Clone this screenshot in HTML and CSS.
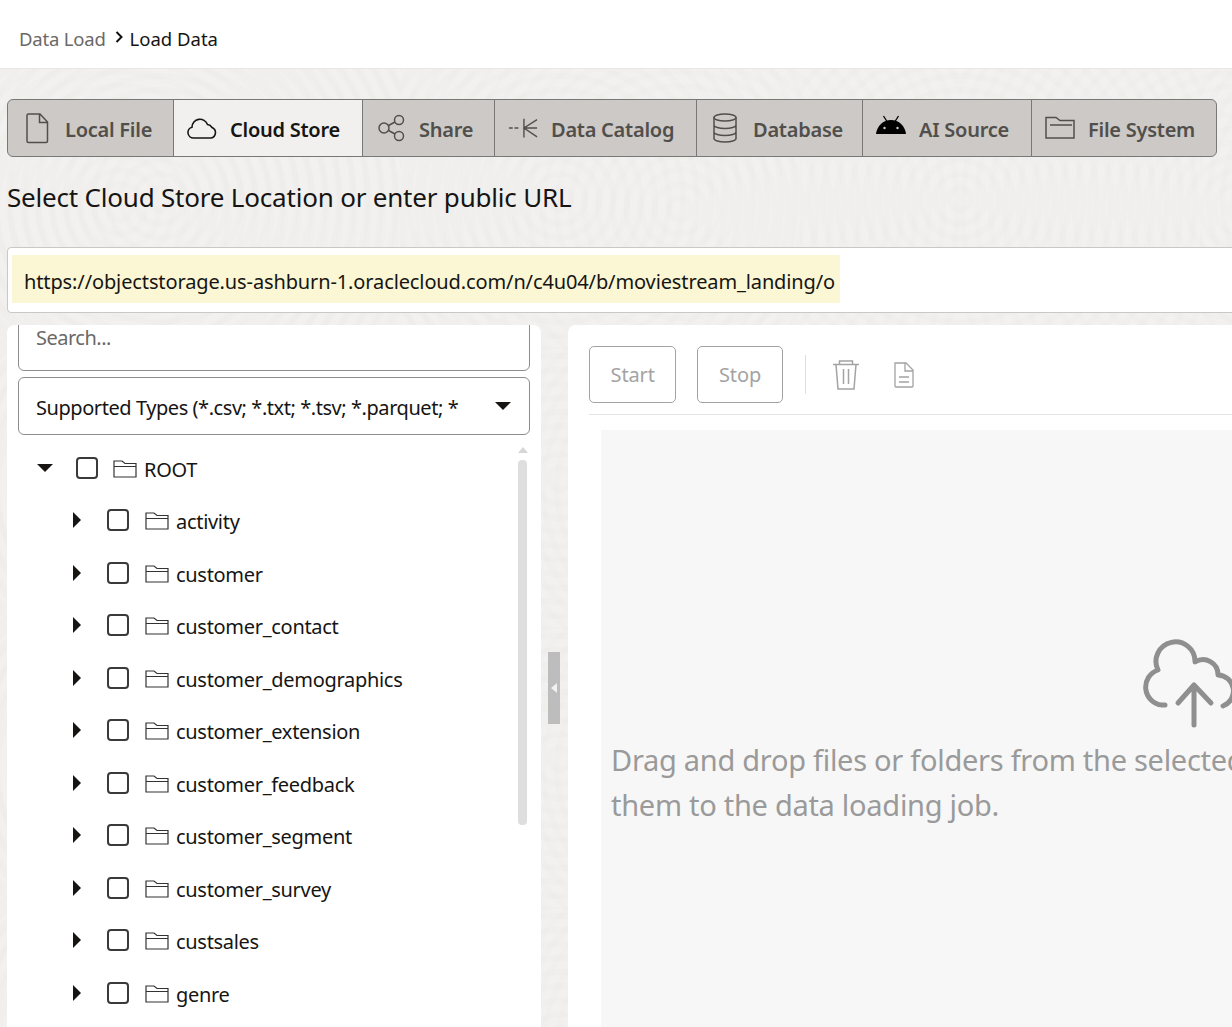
FILE: index.html
```html
<!DOCTYPE html>
<html lang="en">
<head>
<meta charset="utf-8">
<title>Load Data</title>
<link rel="stylesheet" href="styles.css">
</head>
<body>
<header class="crumbs"><span class="crumb-parent">Data Load</span><svg class="crumb-sep" viewBox="0 0 10 14"><path d="M2.500 2l5 5-5 5" fill="none" stroke="#111" stroke-width="2"/></svg><span class="crumb-current">Load Data</span></header>
<main class="stage">
  <nav class="tabs">
    <div class="tab"><span class="tab-icon"><svg width="24" height="32" viewBox="0 0 24 32"><path d="M3.500 2H15l7.500 8v19a1.500 1.500 0 0 1-1.500 1.500H3.500A1.500 1.500 0 0 1 2 29V3.500A1.500 1.500 0 0 1 3.500 2zM14.500 2v8.500h8" fill="none" stroke="currentColor" stroke-width="1.500"/></svg></span><span class="tab-label">Local File</span></div>
    <div class="tab active"><span class="tab-icon"><svg width="30" height="22" viewBox="0 0 30 22"><path d="M6.500 21A5.500 5.500 0 0 1 5 10.200 8 8 0 0 1 20.500 7.500 6 6 0 0 1 25 10.500 5.500 5.500 0 0 1 24 21z" fill="none" stroke="currentColor" stroke-width="1.600"/></svg></span><span class="tab-label">Cloud Store</span></div>
    <div class="tab"><span class="tab-icon"><svg width="28" height="28" viewBox="0 0 28 28"><g fill="none" stroke="currentColor" stroke-width="1.500"><circle cx="7" cy="14" r="5"/><circle cx="22" cy="6" r="4.500"/><circle cx="22" cy="22" r="4.500"/><path d="M11.500 11.500l6.500-3.500M11.500 16.500l6.500 3.500"/></g></svg></span><span class="tab-label">Share</span></div>
    <div class="tab"><span class="tab-icon"><svg width="32" height="24" viewBox="0 0 32 24"><path d="M1 12h4M7 12h4M31 12H17M17 2v20M31 3 17 12l14 9.500" fill="none" stroke="currentColor" stroke-width="1.500"/></svg></span><span class="tab-label">Data Catalog</span></div>
    <div class="tab"><span class="tab-icon"><svg width="24" height="32" viewBox="0 0 24 32"><g fill="none" stroke="currentColor" stroke-width="1.500"><ellipse cx="12" cy="5.500" rx="11" ry="3.500"/><path d="M1 5.500v21c0 2 5 3.500 11 3.500s11-1.500 11-3.500v-21M1 13c0 2 5 3.500 11 3.500S23 15 23 13M1 20c0 2 5 3.500 11 3.500S23 22 23 20"/></g></svg></span><span class="tab-label">Database</span></div>
    <div class="tab"><span class="tab-icon tab-icon-raised"><svg width="30" height="20" viewBox="0 0 30 20"><path d="M7.500 1l3.200 5M22.500 1l-3.200 5" stroke="#000" stroke-width="1.300"/><path d="M0 19C1 11 7 5 15 5s14 6 15 14z" fill="#000"/><circle cx="8.500" cy="13" r="1.200" fill="#ccc"/><circle cx="21.500" cy="13" r="1.200" fill="#ccc"/></svg></span><span class="tab-label">AI Source</span></div>
    <div class="tab"><span class="tab-icon"><svg width="30" height="24" viewBox="0 0 30 24"><path d="M1 1.500h10l4 3h14v17.500H1zM5 9h22" fill="none" stroke="currentColor" stroke-width="1.500"/></svg></span><span class="tab-label">File System</span></div>
  </nav>
  <h1 class="prompt">Select Cloud Store Location or enter public URL</h1>
  <div class="url-box"><span class="url-value">https://objectstorage.us-ashburn-1.oraclecloud.com/n/c4u04/b/moviestream_landing/o</span></div>
  <div class="workspace">
    <section class="browser">
      <div class="field search"><span>Search...</span></div>
      <div class="field types"><span>Supported Types (*.csv; *.txt; *.tsv; *.parquet; *</span><i class="caret"></i></div>
      <div class="tree-wrap">
        <div class="scrollbar"><i class="sb-up"></i><i class="sb-thumb"></i><i class="sb-down"></i></div>
        <ul class="tree">
          <li class="node root"><i class="tw-open"></i><i class="check"></i><svg class="folder" viewBox="0 0 24 18"><path d="M1 1h8l3 2.500h11V17H1zM1.500 6.500h21" fill="none" stroke="#333" stroke-width="1.200"/></svg><span>ROOT</span></li>
          <li class="node"><i class="tw"></i><i class="check"></i><svg class="folder" viewBox="0 0 24 18"><path d="M1 1h8l3 2.500h11V17H1zM1.500 6.500h21" fill="none" stroke="#333" stroke-width="1.200"/></svg><span>activity</span></li>
          <li class="node"><i class="tw"></i><i class="check"></i><svg class="folder" viewBox="0 0 24 18"><path d="M1 1h8l3 2.500h11V17H1zM1.500 6.500h21" fill="none" stroke="#333" stroke-width="1.200"/></svg><span>customer</span></li>
          <li class="node"><i class="tw"></i><i class="check"></i><svg class="folder" viewBox="0 0 24 18"><path d="M1 1h8l3 2.500h11V17H1zM1.500 6.500h21" fill="none" stroke="#333" stroke-width="1.200"/></svg><span>customer_contact</span></li>
          <li class="node"><i class="tw"></i><i class="check"></i><svg class="folder" viewBox="0 0 24 18"><path d="M1 1h8l3 2.500h11V17H1zM1.500 6.500h21" fill="none" stroke="#333" stroke-width="1.200"/></svg><span>customer_demographics</span></li>
          <li class="node"><i class="tw"></i><i class="check"></i><svg class="folder" viewBox="0 0 24 18"><path d="M1 1h8l3 2.500h11V17H1zM1.500 6.500h21" fill="none" stroke="#333" stroke-width="1.200"/></svg><span>customer_extension</span></li>
          <li class="node"><i class="tw"></i><i class="check"></i><svg class="folder" viewBox="0 0 24 18"><path d="M1 1h8l3 2.500h11V17H1zM1.500 6.500h21" fill="none" stroke="#333" stroke-width="1.200"/></svg><span>customer_feedback</span></li>
          <li class="node"><i class="tw"></i><i class="check"></i><svg class="folder" viewBox="0 0 24 18"><path d="M1 1h8l3 2.500h11V17H1zM1.500 6.500h21" fill="none" stroke="#333" stroke-width="1.200"/></svg><span>customer_segment</span></li>
          <li class="node"><i class="tw"></i><i class="check"></i><svg class="folder" viewBox="0 0 24 18"><path d="M1 1h8l3 2.500h11V17H1zM1.500 6.500h21" fill="none" stroke="#333" stroke-width="1.200"/></svg><span>customer_survey</span></li>
          <li class="node"><i class="tw"></i><i class="check"></i><svg class="folder" viewBox="0 0 24 18"><path d="M1 1h8l3 2.500h11V17H1zM1.500 6.500h21" fill="none" stroke="#333" stroke-width="1.200"/></svg><span>custsales</span></li>
          <li class="node"><i class="tw"></i><i class="check"></i><svg class="folder" viewBox="0 0 24 18"><path d="M1 1h8l3 2.500h11V17H1zM1.500 6.500h21" fill="none" stroke="#333" stroke-width="1.200"/></svg><span>genre</span></li>
        </ul>
      </div>
    </section>
    <div class="splitter"><div class="handle"><i></i></div></div>
    <section class="job">
      <div class="toolbar">
        <button class="btn" type="button">Start</button>
        <button class="btn" type="button">Stop</button>
        <span class="divider"></span>
        <svg class="tool-trash" width="26" height="30" viewBox="0 0 26 30"><path d="M0 4.500h26M6.500 4.500V1h13v3.500M3 4.500l2 24.500h16l2-24.500M10.500 9v15M15.500 9v15" fill="none" stroke="#a3a3a3" stroke-width="1.500"/></svg>
        <svg class="tool-file" width="20" height="26" viewBox="0 0 20 26"><path d="M1 1h11l7 7v16a1 1 0 0 1-1 1H2a1 1 0 0 1-1-1zM11 1v8h8M5 15h10M5 20h10" fill="none" stroke="#a3a3a3" stroke-width="1.300"/></svg>
      </div>
      <div class="dropzone">
        <svg class="drop-icon" width="112" height="92" viewBox="0 0 112 92"><g fill="none" stroke="#8f8f8f" stroke-width="5" stroke-linecap="round" stroke-linejoin="round"><path d="M25 66H22A18 18 0 0 1 18 31 19.500 19.500 0 1 1 55 23 15 15 0 0 1 78 36 16 16 0 0 1 83 67"/><path d="M54 86V46M38 64l16-18 17 18"/></g></svg>
        <p class="drop-text">Drag and drop files or folders from the selected location on the left to add<br>them to the data loading job.</p>
      </div>
    </section>
  </div>
</main>
</body>
</html>
```

FILE: styles.css
```css
* { box-sizing: border-box; }
html, body { margin: 0; height: 100%; overflow: hidden; }
body { font-family: "Noto Sans", "Open Sans", sans-serif; color: #161513; background: #fff; display: flex; flex-direction: column; }
.crumbs { height: 69px; flex: none; display: flex; align-items: center; padding: 8px 0 0 19px; font-size: 18.5px; border-bottom: 1px solid #e8e7e5; background: #fff; }
.crumb-parent { color: #6b6966; letter-spacing: -.2px; }
.crumb-sep { width: 10px; height: 14px; margin: -3px 6px 0 8px; }
.stage { flex: 1; min-height: 0; padding: 30px 0 0 7px; overflow: hidden;
  background-color: #f0efed;
  background-image:
    repeating-radial-gradient(circle at 160px 130px, rgba(255,255,255,.07) 0 7px, rgba(226,224,220,.07) 9px 14px),
    repeating-radial-gradient(circle at 280px 140px, rgba(255,255,255,.06) 0 7px, rgba(226,224,220,.06) 9px 14px);
  background-size: 400px 280px, 560px 280px;
  background-position: 0 0, 400px 0; }
.tabs { display: grid; grid-template-columns: 165px 189px 132px 202px 166px 169px 185px; width: 1210px; height: 58px; border: 1px solid #7a7876; border-radius: 6px; overflow: hidden; background: #ccc9c6; }
.tab { display: flex; align-items: center; gap: 13px; padding-left: 13px; border-left: 1px solid #7a7876; font-size: 20px; font-weight: 600; letter-spacing: -.25px; color: #514f4c; white-space: nowrap; }
.tab:first-child { border-left: 0; padding-left: 14px; }
.tab.active { background: #f1f0ee; color: #161513; }
.tab-icon { width: 30px; height: 32px; display: flex; align-items: center; justify-content: center; flex: none; }
.tab-icon-raised { margin-top: -6px; }
.tab-label { margin-top: 2px; }
.prompt { margin: 20px 0 0; font-size: 26px; line-height: 40px; font-weight: 400; letter-spacing: -.2px; color: #161513; }
.url-box { margin-top: 30px; width: 1300px; height: 66px; padding: 7px 0 0 4px; background: #fff; border: 1px solid #c9c8c6; border-radius: 4px; }
.url-value { display: inline-flex; align-items: center; height: 48px; padding: 4px 5px 0 12px; background: #fbf7d4; font-size: 20px; letter-spacing: -.12px; white-space: nowrap; }
.workspace { display: flex; margin-top: 12px; width: 1800px; height: 800px; }
.browser { flex: none; width: 534px; padding: 0 11px; background: #fff; border-radius: 8px 8px 0 0; overflow: hidden; }
.field { width: 512px; border: 1px solid #8e8d8a; border-radius: 6px; font-size: 20px; letter-spacing: -.2px; display: flex; }
.search { height: 58px; margin-top: -12px; padding: 10px 17px 0; color: #6b6966; letter-spacing: -.5px; }
.types { height: 58px; margin-top: 6px; padding: 2px 17px 0; align-items: center; justify-content: space-between; white-space: nowrap; letter-spacing: -.44px; }
.caret { border-left: 8px solid transparent; border-right: 8px solid transparent; border-top: 8px solid #161513; margin: -2px 1px 0 0; }
.tree-wrap { position: relative; }
.scrollbar { position: absolute; left: 500px; top: 1px; width: 9px; bottom: 0; }
.sb-thumb { display: block; position: absolute; top: 16px; width: 9px; height: 365px; background: #dedede; border-radius: 4px; }
.sb-up { position: absolute; top: 3px; left: 0; border: 5px solid transparent; border-top: 0; border-bottom: 6px solid #d6d6d6; }
.sb-down { position: absolute; top: 586px; left: 0; border: 5px solid transparent; border-bottom: 0; border-top: 6px solid #d6d6d6; }
.tree { list-style: none; margin: 8px 0 0; padding: 0; }
.node { height: 52.5px; display: flex; align-items: center; font-size: 20px; letter-spacing: -.3px; padding-left: 55px; }
.node.root { padding-left: 19px; }
.tw { width: 0; height: 0; border-top: 8px solid transparent; border-bottom: 8px solid transparent; border-left: 8px solid #161513; margin: -3px 26px 0 0; }
.tw-open { width: 0; height: 0; border-left: 8px solid transparent; border-right: 8px solid transparent; border-top: 8px solid #161513; margin: -2px 23px 0 0; }
.check { width: 22px; height: 22px; border: 2px solid #3b3a38; border-radius: 4px; margin: -3px 16px 0 0; flex: none; }
.root .check { margin-right: 15px; }
.folder { width: 24px; height: 18px; margin: -1px 7px 0 0; flex: none; }
.splitter { flex: none; width: 27px; display: flex; align-items: flex-start; justify-content: center; }
.handle { width: 12px; height: 72px; margin-top: 327px; margin-right: 2px; background: #bdbdbd; display: flex; align-items: center; justify-content: center; }
.handle i { border-top: 5px solid transparent; border-bottom: 5px solid transparent; border-right: 6px solid #f1f1f1; }
.job { flex: 1; background: #fff; border-radius: 8px 8px 0 0; padding: 21px 21px 0; }
.toolbar { height: 69px; display: flex; align-items: flex-start; border-bottom: 1px solid #e4e3e1; }
.btn { height: 57px; padding: 0 20.5px; background: #fff; border: 1px solid #a3a3a3; border-radius: 5px; font: inherit; font-size: 20px; letter-spacing: -.1px; color: #a3a3a3; margin-right: 21px; }
.divider { width: 1px; height: 39px; margin: 9px 0 0 1px; background: #e0dfdd; }
.tool-trash { margin: 14px 0 0 27px; }
.tool-file { margin: 16px 0 0 35px; }
.dropzone { margin: 15px 0 0 12px; width: 1178px; height: 600px; background: #f7f7f7; display: flex; flex-direction: column; align-items: flex-start; padding: 209px 10px 0; }
.drop-icon { align-self: center; margin-left: 12px; }
.drop-text { margin: 6px 0 0; font-size: 29px; line-height: 45px; letter-spacing: -.28px; color: #9a9a9a; white-space: nowrap; }
```
